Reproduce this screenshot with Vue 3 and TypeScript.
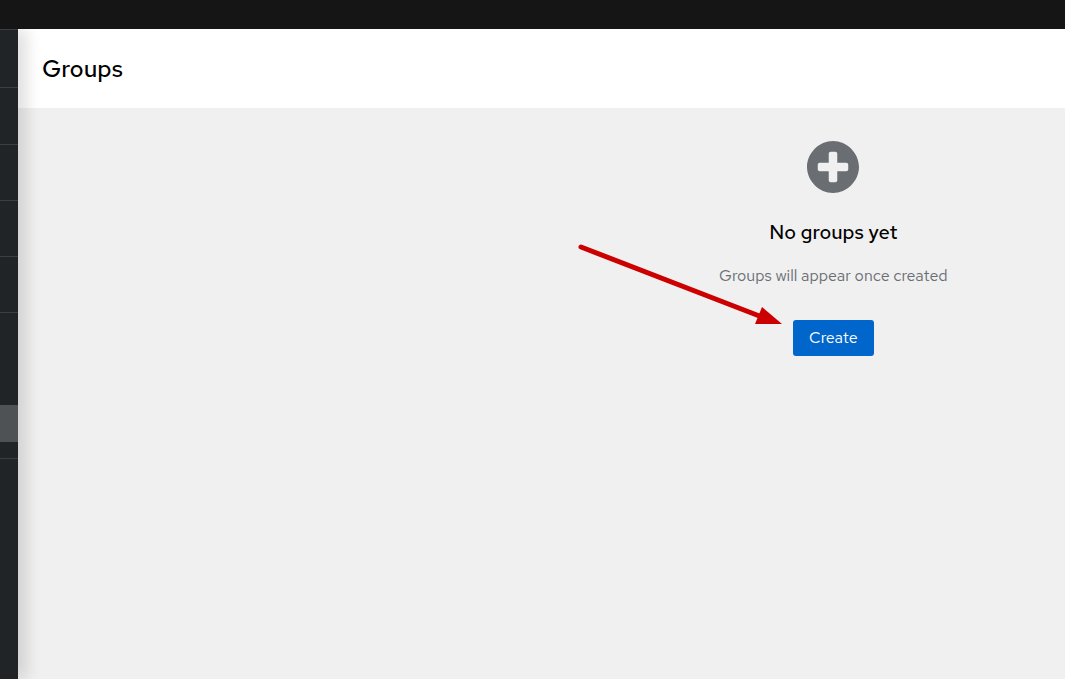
<script setup lang="ts">
interface NavRow {
  id: string
  kind: 'section' | 'tall' | 'rest'
}

const rows: NavRow[] = [
  { id: 'first', kind: 'section' },
  { id: 'second', kind: 'section' },
  { id: 'third', kind: 'section' },
  { id: 'fourth', kind: 'section' },
  { id: 'fifth', kind: 'section' },
  { id: 'expanded', kind: 'tall' },
  { id: 'rest', kind: 'rest' },
]
</script>

<template>
  <div class="page">
    <header class="masthead"></header>
    <div class="body">
      <nav class="sidebar">
        <ul class="nav-list">
          <li v-for="row in rows" :key="row.id" class="nav-row" :class="row.kind">
            <span v-if="row.kind === 'tall'" class="nav-current"></span>
          </li>
        </ul>
      </nav>
      <main class="main">
        <section class="title-bar">
          <h1>Groups</h1>
        </section>
        <section class="content">
          <div class="empty-state">
            <svg class="empty-icon" viewBox="0 0 512 512" aria-hidden="true">
              <path
                fill="currentColor"
                d="M256 0C119 0 0 119 0 256s119 256 256 256 256-119 256-256S393 0 256 0zm150 278c0 11-9 20-20 20h-88v88c0 11-9 20-20 20h-44c-11 0-20-9-20-20v-88h-88c-11 0-20-9-20-20v-44c0-11 9-20 20-20h88v-88c0-11 9-20 20-20h44c11 0 20 9 20 20v88h88c11 0 20 9 20 20z"
              />
            </svg>
            <h2>No groups yet</h2>
            <p>Groups will appear once created</p>
            <div class="action">
              <button type="button">Create</button>
              <svg class="pointer" viewBox="0 0 206 84" aria-hidden="true">
                <path d="M5 5 186 75" stroke="#c00" stroke-width="5" stroke-linecap="round" />
                <path d="M186 65 206 82 179 82z" fill="#c00" />
              </svg>
            </div>
          </div>
        </section>
      </main>
    </div>
  </div>
</template>

<style>
body {
  margin: 0;
}
</style>

<style scoped>
.page {
  display: flex;
  flex-direction: column;
  min-height: 100vh;
  overflow: hidden;
  background: #f0f0f0;
  color: #000;
  font-family: "Red Hat Text", Inter, "Liberation Sans", sans-serif;
}

.masthead {
  height: 29px;
  background: #151515;
}

.body {
  display: flex;
  flex: 1;
}

.sidebar {
  position: relative;
  z-index: 1;
  width: 18px;
  flex: none;
  background: #212427;
  box-shadow: 8px 0 16px rgba(3, 3, 3, 0.14);
  clip-path: inset(0 -32px 0 0);
}

.nav-list {
  margin: 0;
  padding: 0;
  list-style: none;
}

.nav-row {
  box-sizing: border-box;
  border-top: 1px solid #3c3f42;
}

.section {
  height: 56px;
}

.section:first-child {
  height: 58px;
}

.section:nth-child(2) {
  height: 57px;
}

.tall {
  height: 146px;
  padding-top: 92px;
}

.nav-current {
  display: block;
  height: 37px;
  background: #4f5255;
}

.main {
  flex: 1;
  min-width: 0;
}

.title-bar {
  padding: 24px;
  background: #fff;
}

h1 {
  margin: 0;
  font-size: 24px;
  font-weight: 500;
  line-height: 31px;
}

.content {
  display: grid;
  grid-template-columns: 63fr 50fr;
}

.empty-state {
  grid-column: 2;
  display: flex;
  flex-direction: column;
  align-items: center;
  padding: 33px 0 32px;
}

.empty-icon {
  width: 52px;
  height: 52px;
  color: #6a6e73;
}

h2 {
  margin: 24px 0 0;
  font-size: 20px;
  font-weight: 500;
  line-height: 31px;
}

p {
  margin: 16px 0 0;
  color: #6a6e73;
  font-size: 16px;
  line-height: 24px;
}

.action {
  position: relative;
  margin-top: 32px;
}

button {
  display: block;
  padding: 6px 16px;
  border: 0;
  border-radius: 3px;
  background: #06c;
  color: #fff;
  font-family: inherit;
  font-size: 16px;
  line-height: 24px;
}

.pointer {
  position: absolute;
  right: 92px;
  bottom: 30px;
  width: 206px;
  height: 84px;
  pointer-events: none;
}
</style>
